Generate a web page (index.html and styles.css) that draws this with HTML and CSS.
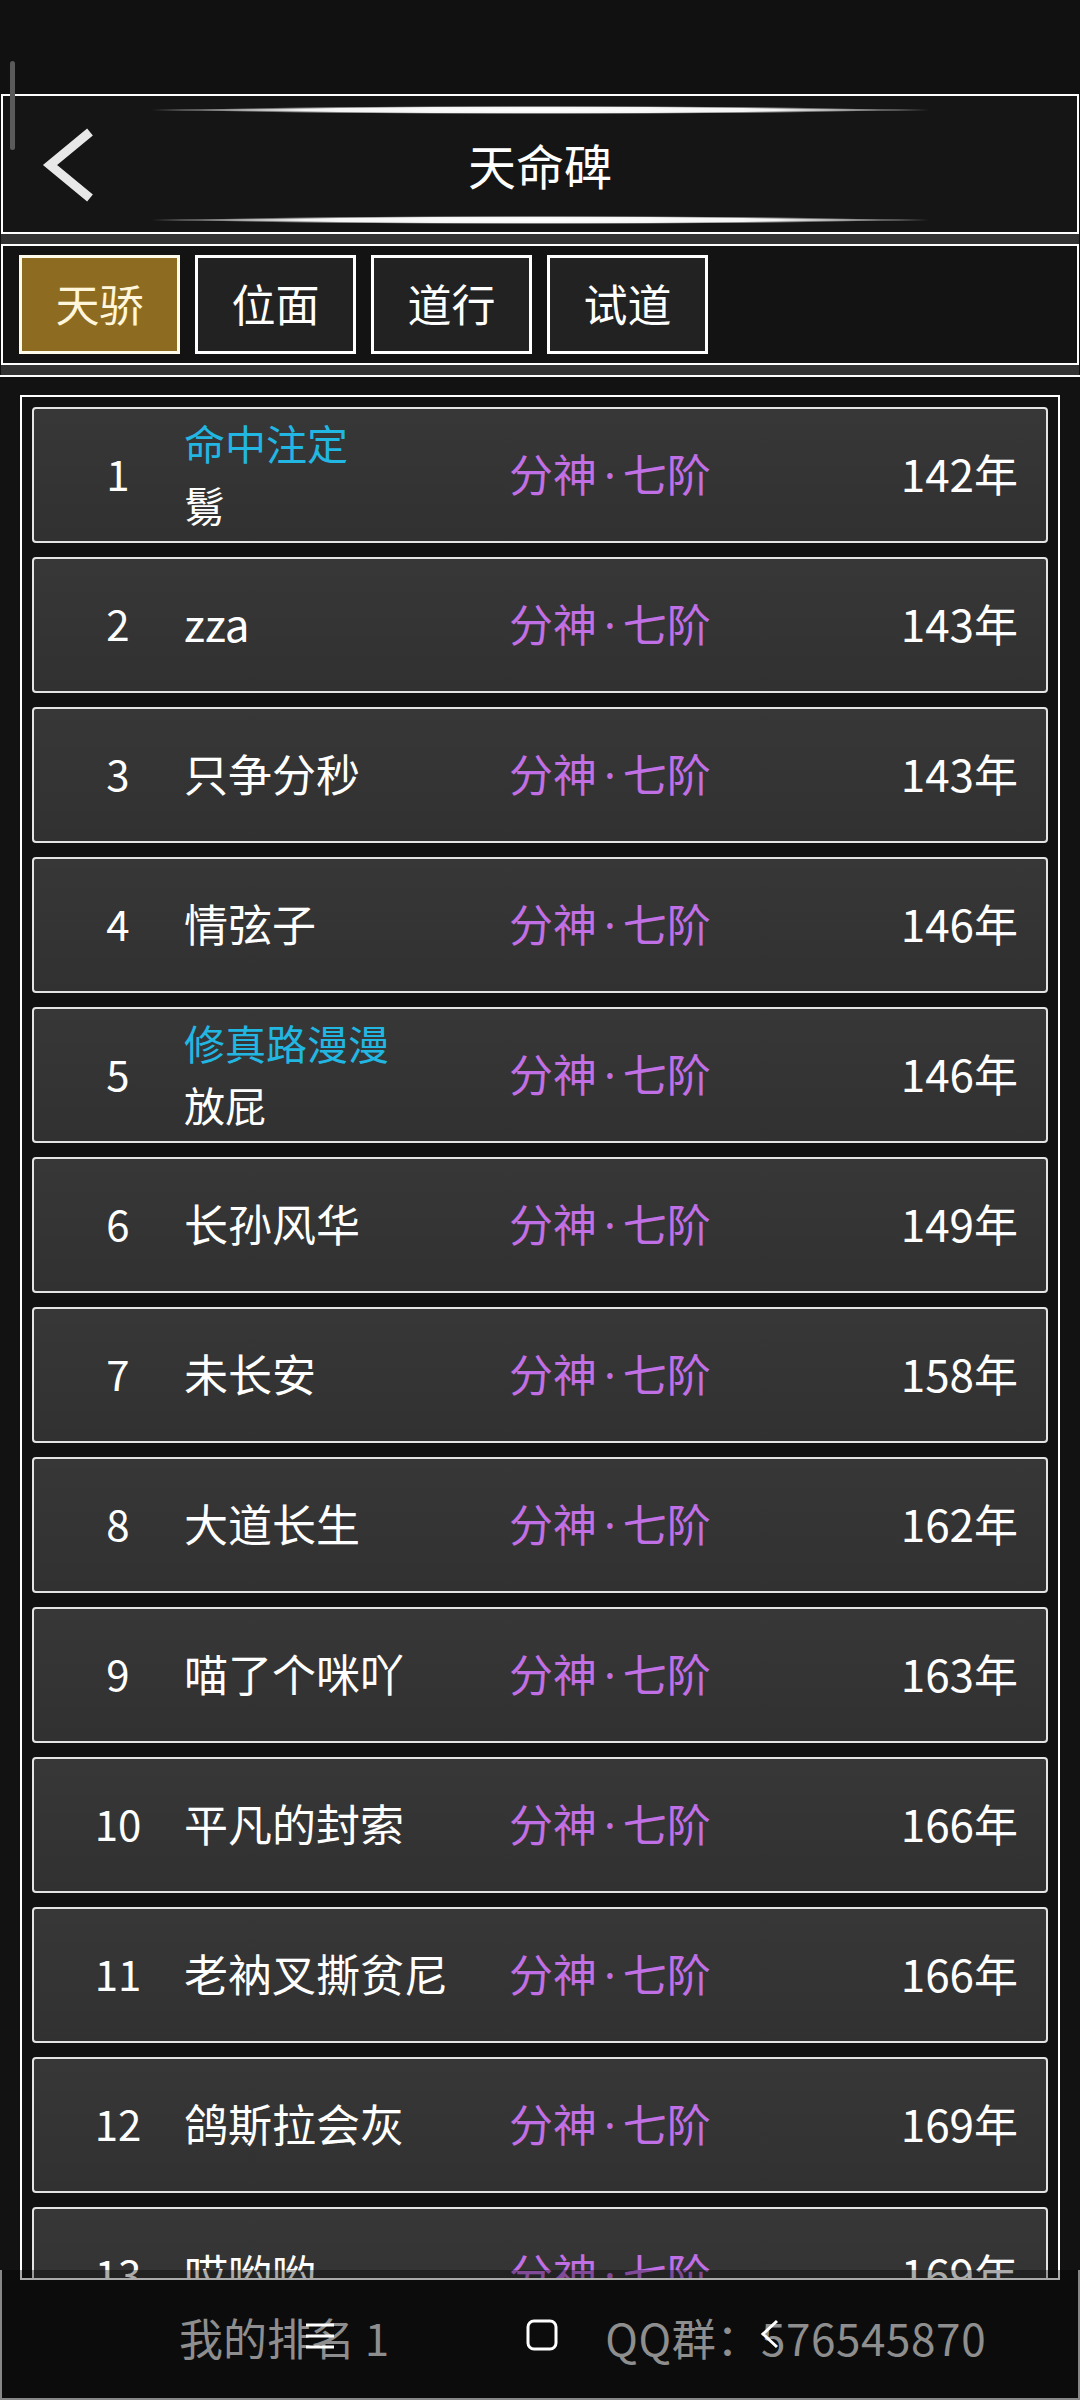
FILE: index.html
```html
<!DOCTYPE html>
<html>
  <head>
    <meta charset="utf-8">
    <link rel="stylesheet" href="styles.css">
  </head>
  <body>
    <div id="screen">
      <div class="statusbar"></div>
      <div class="scrollthumb"></div>

      <div class="header">
        <div class="back">
          <svg width="60" height="80" viewBox="0 0 60 80">
            <polyline points="53,7 13,40 53,73" fill="none" stroke="#e8e8e8" stroke-width="9"/>
          </svg>
        </div>
        <div class="deco"></div>
        <div class="title">天命碑</div>
        <div class="deco"></div>
      </div>
      <div class="sep"></div>

      <div class="tabs">
        <div class="tab active">天骄</div>
        <div class="tab">位面</div>
        <div class="tab">道行</div>
        <div class="tab">试道</div>
      </div>
      <div class="sep"></div>

      <div class="listarea">
        <div class="frame" id="list"></div>
      </div>

      <div class="bottombar">
        <span class="myrank">我的排名 1</span>
        <span class="qq">QQ群：576545870</span>
        <div class="navkeys">
          <svg class="key-menu" width="32" height="28" viewBox="0 0 32 28">
            <path d="M2 3H30M2 14H30M2 25H30" stroke="#fff" stroke-width="3"/>
          </svg>
          <svg class="key-home" width="32" height="32" viewBox="0 0 32 32">
            <rect x="2" y="2" width="28" height="28" rx="6" fill="none" stroke="#fff" stroke-width="3"/>
          </svg>
          <svg class="key-back" width="22" height="30" viewBox="0 0 22 30">
            <polyline points="18,2 4,15 18,28" fill="none" stroke="#fff" stroke-width="3"/>
          </svg>
        </div>
      </div>
    </div>

    <script>
      var players = [
        [1, '鬄', '命中注定', '142年'],
        [2, 'zza', '', '143年'],
        [3, '只争分秒', '', '143年'],
        [4, '情弦子', '', '146年'],
        [5, '放屁', '修真路漫漫', '146年'],
        [6, '长孙风华', '', '149年'],
        [7, '未长安', '', '158年'],
        [8, '大道长生', '', '162年'],
        [9, '喵了个咪吖', '', '163年'],
        [10, '平凡的封索', '', '166年'],
        [11, '老衲叉撕贫尼', '', '166年'],
        [12, '鸽斯拉会灰', '', '169年'],
        [13, '哎哟哟', '', '169年']
      ];

      var list = document.getElementById('list');
      players.forEach(function(p) {
        var row = document.createElement('div');
        row.className = 'row';
        var name = p[2]
          ? '<div class="name two"><div class="honor">' + p[2] + '</div><div>' + p[1] + '</div></div>'
          : '<div class="name">' + p[1] + '</div>';
        row.innerHTML =
          '<div class="rank">' + p[0] + '</div>' + name +
          '<div class="realm">分神<span class="dot">·</span>七阶</div>' +
          '<div class="age">' + p[3] + '</div>';
        list.appendChild(row);
      });
    </script>
  </body>
</html>
```

FILE: styles.css
```css
html, body {
  margin: 0;
  padding: 0;
}
body {
  background: #111;
  font-family: "Noto Sans CJK SC", "Noto Sans", sans-serif;
  color: #fff;
}
#screen {
  width: 1080px;
  height: 2400px;
  position: relative;
  overflow: hidden;
  display: flex;
  flex-direction: column;
}
.statusbar {
  height: 94px;
  flex: none;
}
.scrollthumb {
  position: absolute;
  left: 10px;
  top: 61px;
  width: 5px;
  height: 89px;
  border-radius: 3px;
  background: #5a5a5a;
  z-index: 3;
}

/* header */
.header {
  flex: none;
  height: 140px;
  box-sizing: border-box;
  margin: 0 1px;
  border: 2px solid #fff;
  background: #151515;
  display: grid;
  grid-template-columns: 1fr 777px 1fr;
  grid-template-rows: 8px 1fr 8px;
  padding: 10px 0 8px;
}
.back {
  grid-column: 1;
  grid-row: 1 / 4;
  display: flex;
  align-items: center;
  padding-left: 34px;
}
.back svg {
  display: block;
}
.deco {
  grid-column: 2;
  height: 8px;
  background:
    radial-gradient(ellipse 44% 50% at center, #fff 0%, #f4f4f4 70%, rgba(200,200,200,0.5) 88%, rgba(0,0,0,0) 100%),
    linear-gradient(to right, rgba(90,90,90,0) 0%, #505050 4%, #888 12%, #888 88%, #505050 96%, rgba(90,90,90,0) 100%) center / 100% 2px no-repeat;
}
.title {
  grid-column: 2;
  display: flex;
  align-items: center;
  justify-content: center;
  padding-bottom: 3px;
  font-size: 48px;
  color: #fff;
}

.sep {
  flex: none;
  height: 10px;
  margin: 0 1px;
  background: #333;
}

/* tabs */
.tabs {
  flex: none;
  height: 121px;
  box-sizing: border-box;
  margin: 0 1px;
  border: 2px solid #fff;
  background: #131313;
  display: flex;
  align-items: center;
  gap: 15px;
  padding: 0 0 1px 16px;
}
.tab {
  width: 161px;
  height: 99px;
  box-sizing: border-box;
  border: 3px solid #fff;
  background: #222;
  display: flex;
  align-items: center;
  justify-content: center;
  padding-bottom: 3px;
  font-size: 44px;
  color: #fff;
}
.tab.active {
  background: #8d6c22;
  border-color: #fffbea;
  color: #fff6dc;
}

/* ranking list */
.listarea {
  flex: 1;
  border-top: 2px solid #fff;
  background: #121212;
  padding: 18px 20px 0;
}
.frame {
  height: 1885px;
  box-sizing: border-box;
  border: 2px solid #fff;
  padding: 10px;
  overflow: hidden;
}
.row {
  height: 136px;
  box-sizing: border-box;
  margin-bottom: 14px;
  border: 2px solid #e4e4e4;
  border-radius: 4px;
  background: linear-gradient(#373737, #313131);
  display: grid;
  grid-template-columns: 100px 341px 1fr auto;
  align-items: center;
  padding: 0 28px 5px 34px;
}
.rank {
  text-align: center;
  font-size: 42px;
}
.name {
  padding-left: 16px;
  font-size: 44px;
  white-space: nowrap;
}
.name.two {
  font-size: 41px;
  line-height: 62px;
}
.honor {
  color: #22b7e2;
}
.realm {
  font-size: 44px;
  color: #c06fe4;
  white-space: nowrap;
}
.dot {
  font-family: "Noto Sans", sans-serif;
  margin: 0 7px;
}
.age {
  font-size: 44px;
  text-align: right;
}

/* bottom bar */
.bottombar {
  position: absolute;
  left: 0;
  bottom: 0;
  width: 1080px;
  height: 130px;
  box-sizing: border-box;
  border: 2px solid #888;
  border-top: none;
  background: rgba(0, 0, 0, 0.33);
  display: flex;
  align-items: center;
  padding: 5px 0 0 177px;
  font-size: 44px;
  color: #8e8e8e;
  z-index: 2;
}
.qq {
  margin-left: 216px;
  letter-spacing: 0.6px;
}
.navkeys svg {
  position: absolute;
  display: block;
}
.key-menu {
  left: 302px;
  top: 52px;
}
.key-home {
  left: 524px;
  top: 49px;
}
.key-back {
  left: 757px;
  top: 49px;
}
```
